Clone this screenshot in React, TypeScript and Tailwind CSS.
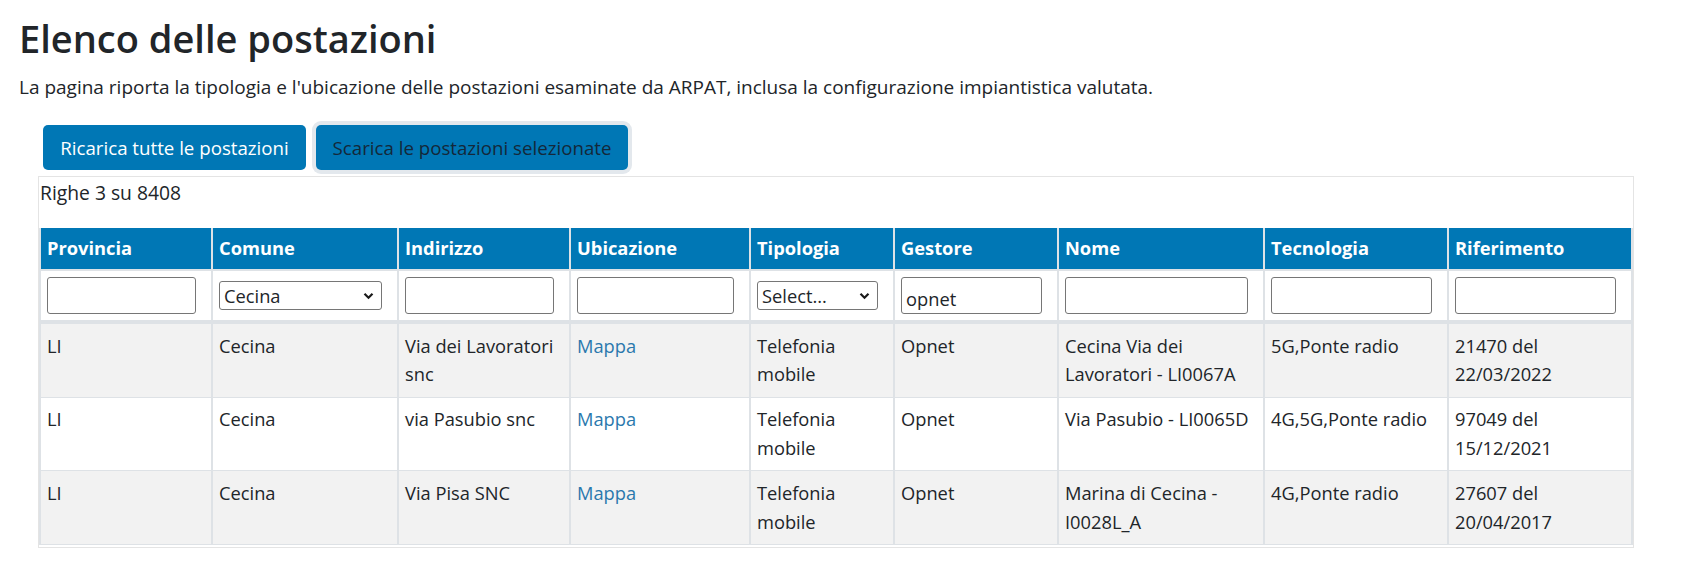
import { useState } from "react";

const columns = [
  { title: "Provincia", width: 172, filter: "text" },
  { title: "Comune", width: 186, filter: "select" },
  { title: "Indirizzo", width: 172, filter: "text" },
  { title: "Ubicazione", width: 180, filter: "text" },
  { title: "Tipologia", width: 144, filter: "select" },
  { title: "Gestore", width: 164, filter: "text" },
  { title: "Nome", width: 206, filter: "text" },
  { title: "Tecnologia", width: 184, filter: "text" },
  { title: "Riferimento", width: 184, filter: "text" },
];

const rows = [
  {
    provincia: "LI",
    comune: "Cecina",
    indirizzo: "Via dei Lavoratori snc",
    tipologia: "Telefonia mobile",
    gestore: "Opnet",
    nome: "Cecina Via dei Lavoratori - LI0067A",
    tecnologia: "5G,Ponte radio",
    riferimento: "21470 del 22/03/2022",
  },
  {
    provincia: "LI",
    comune: "Cecina",
    indirizzo: "via Pasubio snc",
    tipologia: "Telefonia mobile",
    gestore: "Opnet",
    nome: "Via Pasubio - LI0065D",
    tecnologia: "4G,5G,Ponte radio",
    riferimento: "97049 del 15/12/2021",
  },
  {
    provincia: "LI",
    comune: "Cecina",
    indirizzo: "Via Pisa SNC",
    tipologia: "Telefonia mobile",
    gestore: "Opnet",
    nome: "Marina di Cecina - I0028L_A",
    tecnologia: "4G,Ponte radio",
    riferimento: "27607 del 20/04/2017",
  },
];

const Chevron = () => (
  <svg
    className="pointer-events-none absolute right-[8px] top-1/2 -translate-y-1/2"
    width="11"
    height="8"
    viewBox="0 0 11 8"
  >
    <path d="M1.5 1.8 L5.5 5.8 L9.5 1.8" fill="none" stroke="#1a1a1a" strokeWidth="2.2" />
  </svg>
);

const App = () => {
  const [filters, setFilters] = useState<Record<string, string>>({
    Comune: "Cecina",
    Tipologia: "",
    Gestore: "opnet",
  });

  const setFilter = (key: string, value: string) => {
    setFilters({ ...filters, [key]: value });
  };

  return (
    <div className="min-h-screen bg-white px-[19px] pt-[16px] text-[#212529] font-['Open_Sans',sans-serif]">
      <h1 className="text-[38px] leading-[1.2] font-semibold">Elenco delle postazioni</h1>
      <p className="mt-[11px] text-[19px] leading-[28.8px]">
        La pagina riporta la tipologia e l'ubicazione delle postazioni esaminate da ARPAT, inclusa la
        configurazione impiantistica valutata.
      </p>

      <div className="ml-[19px] mt-[24px] w-[1596px]">
        <div className="flex items-center gap-[10px] pl-[5px]">
          <button className="h-[45px] w-[263px] rounded-[5px] bg-[#0077b5] text-[18.7px] text-white">
            Ricarica tutte le postazioni
          </button>
          <button className="h-[45px] w-[312px] rounded-[5px] bg-[#0077b5] text-[18.7px] text-[#14283a] ring-4 ring-[#e3e8ed]">
            Scarica le postazioni selezionate
          </button>
        </div>

        <div className="mt-[6px] border border-[#e4e4e4] pb-[2px]">
          <div className="pl-[1px] pt-[2px] text-[19.3px] leading-[28.8px]">Righe 3 su 8408</div>
          <table className="mt-[20px] w-full table-fixed border-collapse text-[18.3px] leading-[28.8px]">
            <colgroup>
              {columns.map((c) => (
                <col key={c.title} style={{ width: c.width }} />
              ))}
            </colgroup>
            <thead>
              <tr>
                {columns.map((c) => (
                  <th
                    key={c.title}
                    className="h-[42px] border-x-2 border-b-2 border-[#dee2e6] bg-[#0077b5] px-[6px] text-left font-bold text-white"
                  >
                    {c.title}
                  </th>
                ))}
              </tr>
              <tr>
                {columns.map((c) => (
                  <td
                    key={c.title}
                    className="h-[52px] border-x-2 border-b-4 border-[#dee2e6] bg-white px-[6px] align-middle"
                  >
                    {c.filter === "select" ? (
                      <div className="relative w-[calc(100%-9px)]">
                        <select
                          value={filters[c.title]}
                          onChange={(e) => setFilter(c.title, e.target.value)}
                          className="block h-[29px] w-full appearance-none rounded-[3px] border border-[#767676] bg-white pl-[4px] pr-[22px] text-[18.3px] leading-[27px]"
                        >
                          {c.title === "Comune" ? (
                            <option value="Cecina">Cecina</option>
                          ) : (
                            <>
                              <option value="">Select...</option>
                              <option value="Telefonia mobile">Telefonia mobile</option>
                            </>
                          )}
                        </select>
                        <Chevron />
                      </div>
                    ) : (
                      <input
                        value={filters[c.title] || ""}
                        onChange={(e) => setFilter(c.title, e.target.value)}
                        className="block h-[37px] w-[calc(100%-9px)] rounded-[3px] border border-[#767676] bg-white px-[4px] pt-[6px] text-[18.3px] outline-none"
                      />
                    )}
                  </td>
                ))}
              </tr>
            </thead>
            <tbody>
              {rows.map((r, i) => (
                <tr key={i} className={i % 2 === 0 ? "bg-[#f2f2f2]" : "bg-white"}>
                  <td className="border-x-2 border-b border-[#dee2e6] px-[6px] py-[7.5px] align-top">{r.provincia}</td>
                  <td className="border-x-2 border-b border-[#dee2e6] px-[6px] py-[7.5px] align-top">{r.comune}</td>
                  <td className="border-x-2 border-b border-[#dee2e6] px-[6px] py-[7.5px] align-top">{r.indirizzo}</td>
                  <td className="border-x-2 border-b border-[#dee2e6] px-[6px] py-[7.5px] align-top">
                    <a href="#" className="text-[#2a78ad]">
                      Mappa
                    </a>
                  </td>
                  <td className="border-x-2 border-b border-[#dee2e6] px-[6px] py-[7.5px] align-top">{r.tipologia}</td>
                  <td className="border-x-2 border-b border-[#dee2e6] px-[6px] py-[7.5px] align-top">{r.gestore}</td>
                  <td className="border-x-2 border-b border-[#dee2e6] px-[6px] py-[7.5px] align-top">{r.nome}</td>
                  <td className="border-x-2 border-b border-[#dee2e6] px-[6px] py-[7.5px] align-top">{r.tecnologia}</td>
                  <td className="border-x-2 border-b border-[#dee2e6] px-[6px] py-[7.5px] align-top">{r.riferimento}</td>
                </tr>
              ))}
            </tbody>
          </table>
        </div>
      </div>
    </div>
  );
};

export default App;
